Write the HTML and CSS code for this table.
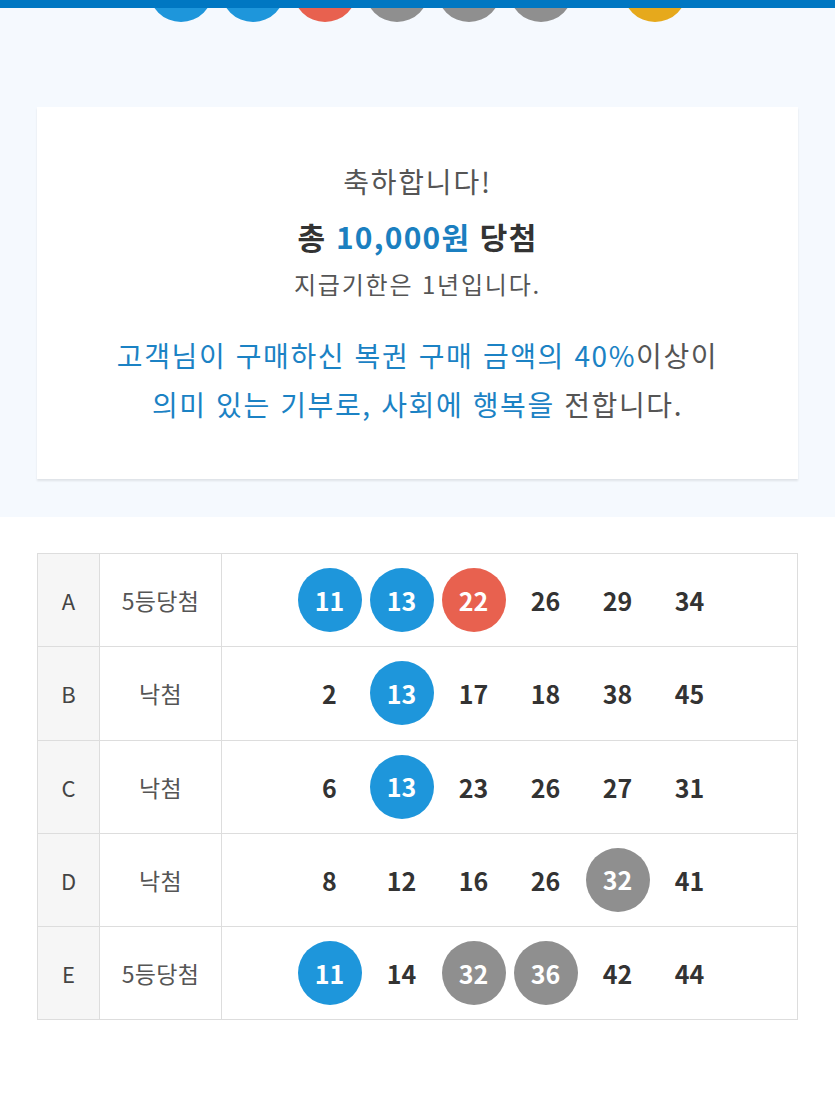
FILE: index.html
```html
<!DOCTYPE html>
<html lang="ko">
<head>
<meta charset="utf-8">
<link rel="stylesheet" href="styles.css">
</head>
<body>
<div class="topbar"></div>
<section class="summary">
  <div class="draw">
    <span class="ball blue">1</span>
    <span class="ball blue">11</span>
    <span class="ball red">22</span>
    <span class="ball grey">32</span>
    <span class="ball grey">36</span>
    <span class="ball grey">40</span>
    <span class="plus">+</span>
    <span class="ball yellow">5</span>
  </div>
  <div class="card">
    <p class="congrats">축하합니다!</p>
    <p class="total">총 <span class="amt">10,000원</span> 당첨</p>
    <p class="limit">지급기한은 1년입니다.</p>
    <p class="donate"><span class="hl">고객님이 구매하신 복권 구매 금액의 40%</span>이상이<br><span class="hl">의미 있는 기부로, 사회에 행복을</span> 전합니다.</p>
  </div>
</section>
<section class="results">
  <table class="tbl">
    <tr>
      <td class="slot">A</td><td class="res">5등당첨</td>
      <td class="nums"><div class="row"><span class="ball blue">11</span><span class="ball blue">13</span><span class="ball red">22</span><span class="n">26</span><span class="n">29</span><span class="n">34</span></div></td>
    </tr>
    <tr>
      <td class="slot">B</td><td class="res">낙첨</td>
      <td class="nums"><div class="row"><span class="n">2</span><span class="ball blue">13</span><span class="n">17</span><span class="n">18</span><span class="n">38</span><span class="n">45</span></div></td>
    </tr>
    <tr>
      <td class="slot">C</td><td class="res">낙첨</td>
      <td class="nums"><div class="row"><span class="n">6</span><span class="ball blue">13</span><span class="n">23</span><span class="n">26</span><span class="n">27</span><span class="n">31</span></div></td>
    </tr>
    <tr>
      <td class="slot">D</td><td class="res">낙첨</td>
      <td class="nums"><div class="row"><span class="n">8</span><span class="n">12</span><span class="n">16</span><span class="n">26</span><span class="ball grey">32</span><span class="n">41</span></div></td>
    </tr>
    <tr>
      <td class="slot">E</td><td class="res">5등당첨</td>
      <td class="nums"><div class="row"><span class="ball blue">11</span><span class="n">14</span><span class="ball grey">32</span><span class="ball grey">36</span><span class="n">42</span><span class="n">44</span></div></td>
    </tr>
  </table>
</section>
</body>
</html>
```
FILE: styles.css
```css
* { box-sizing: border-box; }
html, body { margin: 0; padding: 0; }
body {
  width: 835px;
  height: 1102px;
  overflow: hidden;
  background: #fff;
  font-family: "Noto Sans CJK KR", "Noto Sans", sans-serif;
  color: #333;
  position: relative;
}
.topbar {
  position: absolute;
  top: 0; left: 0; right: 0;
  height: 8px;
  background: #0077c2;
  z-index: 2;
}
.summary {
  background: #f5f9fe;
  padding: 0 37px 38px;
  overflow: hidden;
}
.draw {
  display: flex;
  justify-content: center;
  margin-top: -42px;
}
.draw .ball { margin: 0 4px; }
.plus {
  width: 42px;
  text-align: center;
  font-size: 28px;
  line-height: 64px;
  color: #999;
}
.ball {
  width: 64px;
  height: 64px;
  border-radius: 50%;
  display: inline-flex;
  align-items: center;
  justify-content: center;
  color: #fff;
  font-size: 25px;
  font-weight: 700;
  line-height: 1;
}
.blue { background: #1e96db; }
.red { background: #e8614f; }
.grey { background: #8f8f8f; }
.yellow { background: #e6a91c; }
.card {
  margin-top: 85px;
  background: #fff;
  box-shadow: 0 2px 2px rgba(0,0,0,0.09);
  padding: 55px 0 50px;
  text-align: center;
}
.card p { margin: 0; }
.congrats {
  font-size: 28px;
  line-height: 38px;
  font-weight: 400;
  letter-spacing: 1.8px;
  color: #555;
}
.total {
  margin-top: 16px !important;
  font-size: 30px;
  line-height: 40px;
  font-weight: 700;
  letter-spacing: 1.2px;
  color: #333;
}
.amt { color: #1b7fc0; }
.limit {
  margin-top: 11px !important;
  font-size: 24px;
  line-height: 34px;
  font-weight: 400;
  letter-spacing: 1.8px;
  color: #555;
}
.donate {
  margin-top: 30px !important;
  font-size: 28px;
  line-height: 49px;
  font-weight: 400;
  letter-spacing: 1.6px;
  color: #555;
}
.hl { color: #1b82c4; }
.results {
  padding: 36px 37px 0;
}
.tbl {
  width: 761px;
  border-collapse: collapse;
  border: 1px solid #dddddd;
}
.tbl td {
  border: 1px solid #dddddd;
  height: 93.25px;
  padding: 0;
  text-align: center;
  vertical-align: middle;
}
.slot {
  width: 62px;
  background: #f6f6f6;
  font-size: 22px;
  font-weight: 400;
  color: #444;
}
.res {
  width: 122px;
  font-size: 23px;
  font-weight: 400;
  letter-spacing: 0.3px;
  color: #555;
}
.row {
  display: flex;
  justify-content: center;
  gap: 8px;
}
.n {
  width: 64px;
  height: 64px;
  display: inline-flex;
  align-items: center;
  justify-content: center;
  font-size: 25px;
  font-weight: 700;
  color: #333;
}
```
